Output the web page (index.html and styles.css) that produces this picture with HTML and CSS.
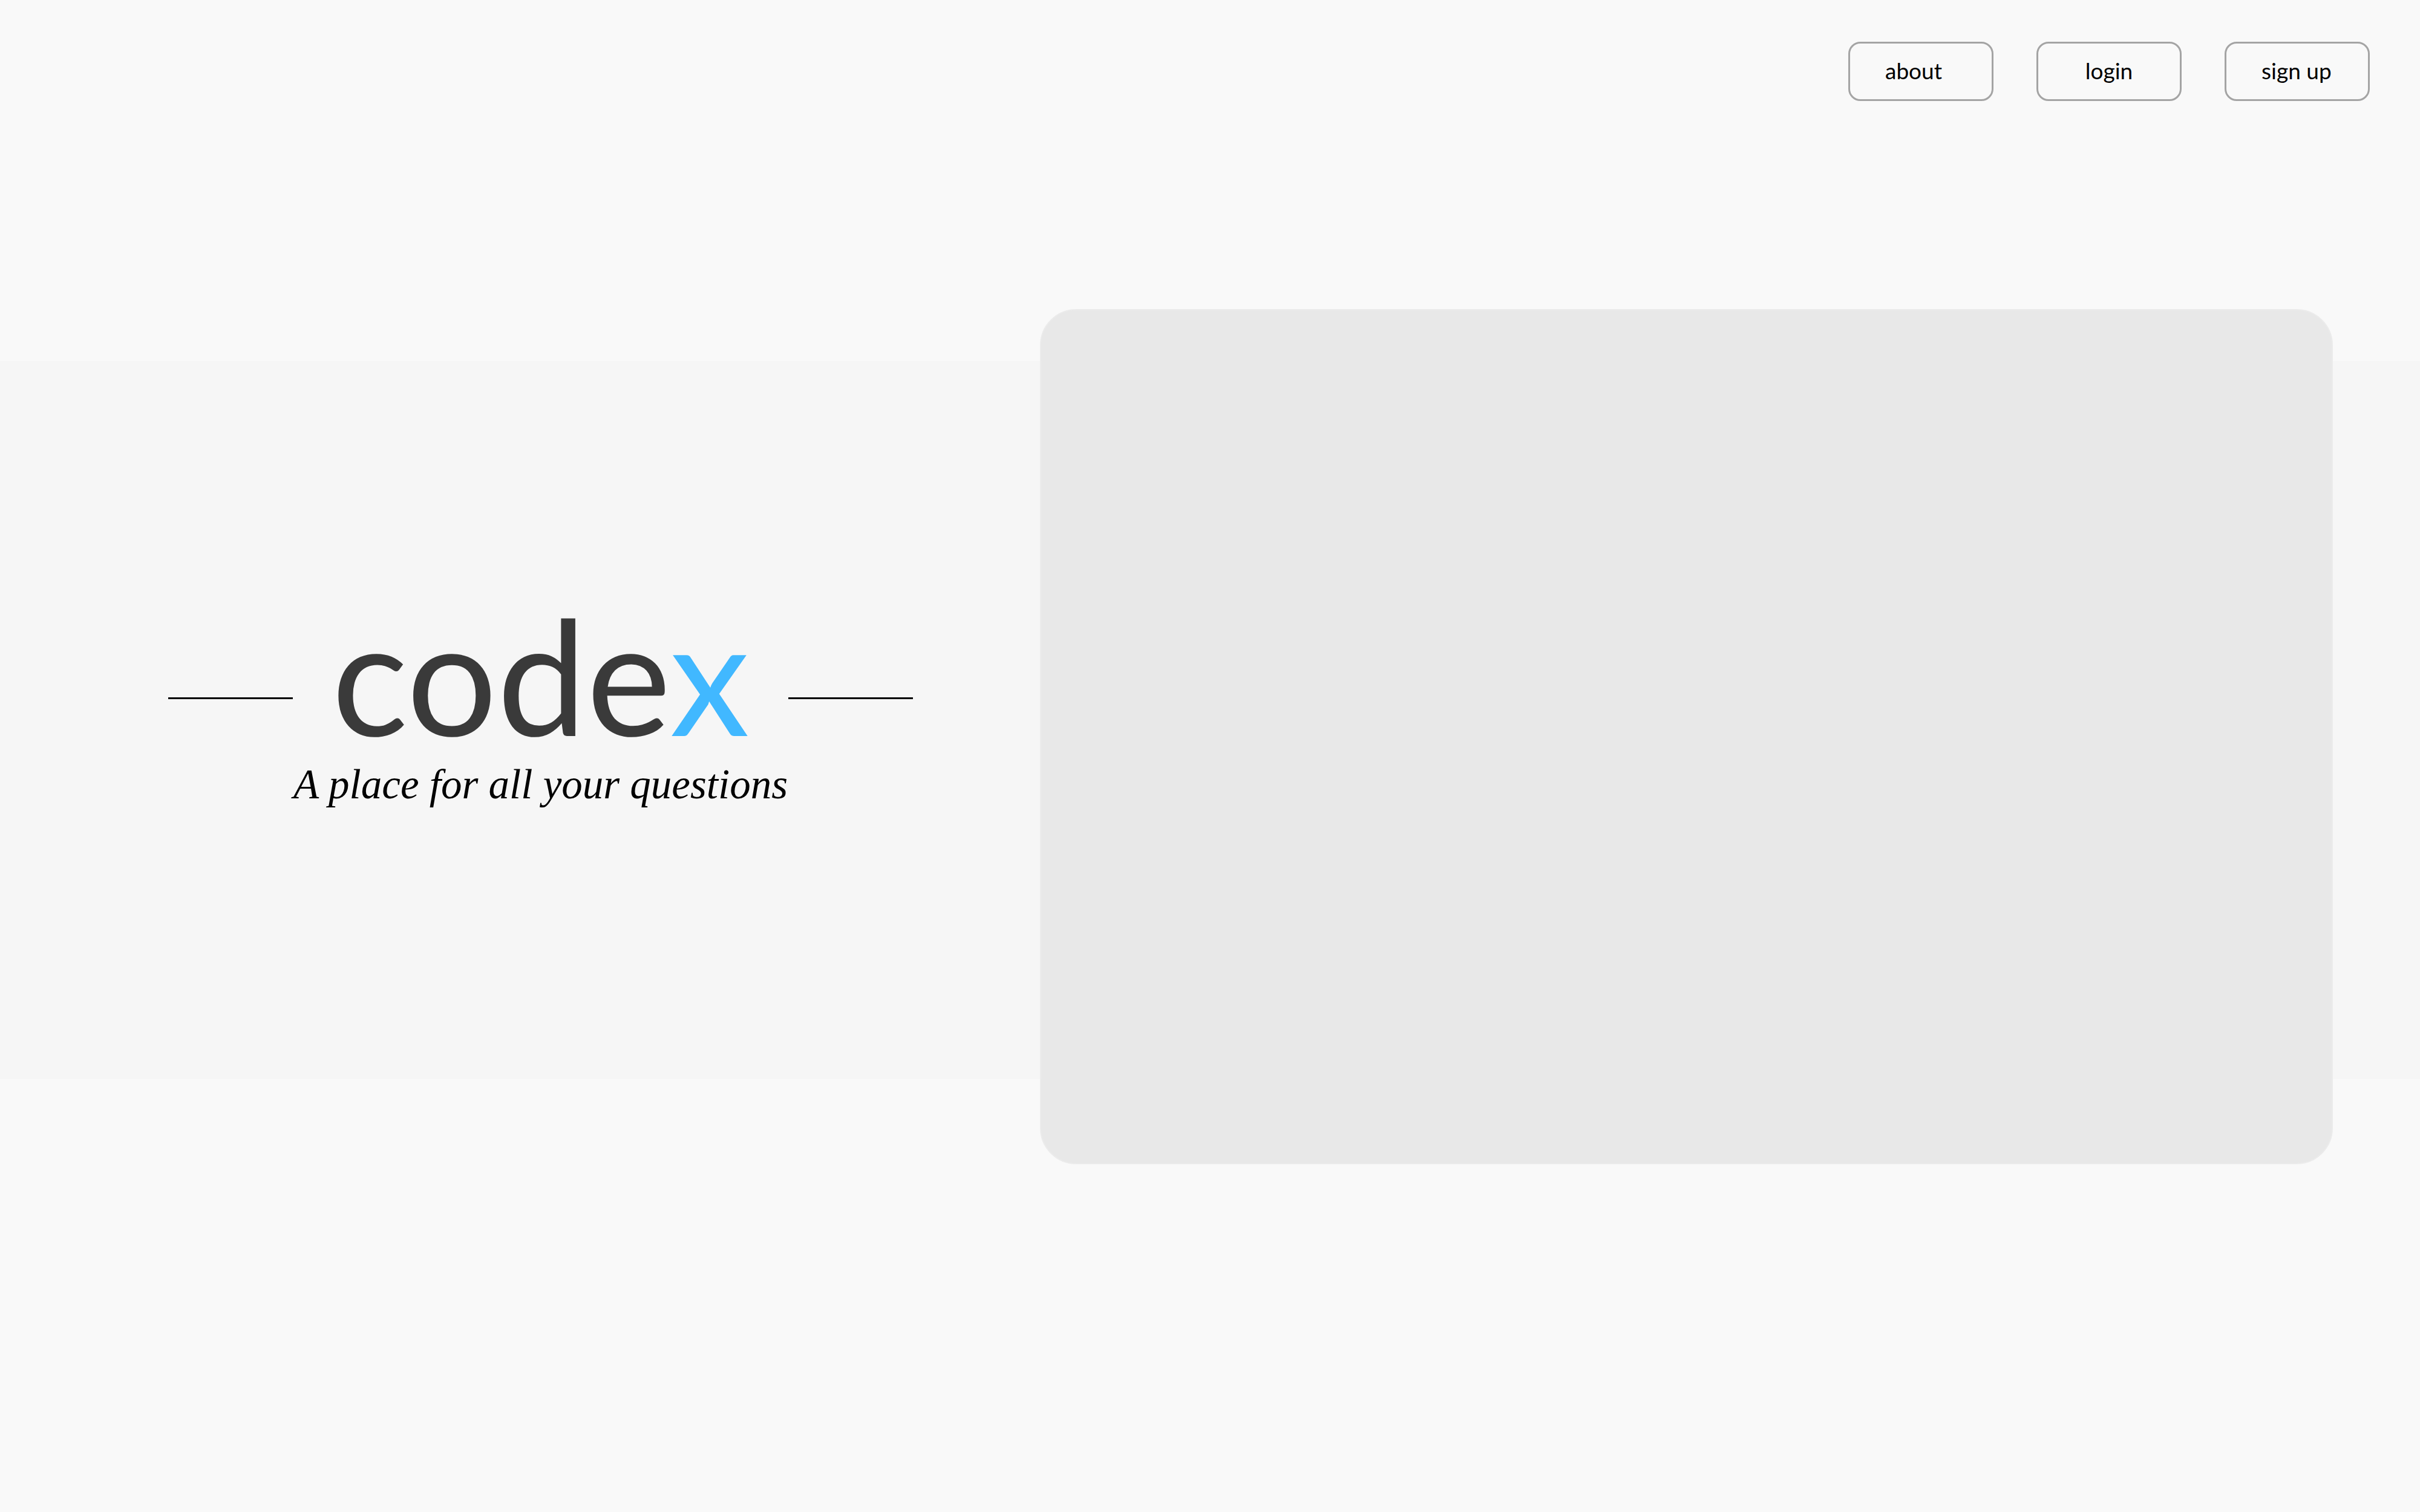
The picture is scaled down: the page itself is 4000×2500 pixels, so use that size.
FILE: index.html
```html
<!DOCTYPE html>
<html lang="en">
<head>
<meta charset="utf-8">
<meta name="viewport" content="width=device-width, initial-scale=1">
<title>codex</title>
<link rel="stylesheet" href="styles.css">
</head>
<body>
<header class="site-header">
  <nav class="nav">
    <button type="button" class="nav-button">about</button>
    <button type="button" class="nav-button nav-button-centered">login</button>
    <button type="button" class="nav-button">sign up</button>
  </nav>
</header>
<main class="hero">
  <section class="intro">
    <div class="brand">
      <span class="rule"></span>
      <h1 class="wordmark">code<span class="accent">x</span></h1>
      <span class="rule"></span>
    </div>
    <p class="tagline">A place for all your questions</p>
  </section>
  <section class="panel"></section>
</main>
</body>
</html>
```

FILE: styles.css
```css
* {
  box-sizing: border-box;
}

body {
  margin: 0;
  min-height: 100vh;
  background: #f9f9f9;
  color: #000;
  font-family: Lato, "Liberation Sans", sans-serif;
}

.site-header {
  padding: 69px 83px 430px;
}

.nav {
  display: flex;
  justify-content: flex-end;
  gap: 71px;
}

.nav-button {
  width: 240px;
  height: 98px;
  padding: 0 58px 2px;
  border: 3px solid #a4a4a4;
  border-radius: 20px;
  background: transparent;
  color: #000;
  font-family: inherit;
  font-size: 37px;
  line-height: 48px;
  text-align: left;
  white-space: nowrap;
  cursor: pointer;
}

.nav-button-centered {
  text-align: center;
}

.hero {
  display: grid;
  grid-template-columns: 1719fr 2137fr;
  align-items: center;
  padding-right: 144px;
  background: #f6f6f6;
}

.intro {
  padding: 0 0 68px 68px;
  text-align: center;
}

.brand {
  display: flex;
  align-items: center;
  justify-content: center;
  gap: 64px;
}

.rule {
  width: 206px;
  height: 3px;
  margin-top: 80px;
  background: #000;
}

.wordmark {
  margin: 0;
  color: #3a3a3a;
  font-size: 264px;
  font-weight: 400;
  line-height: 280px;
}

.accent {
  color: #41b8ff;
}

.tagline {
  margin: 0;
  font-family: "Liberation Serif", serif;
  font-size: 69px;
  font-style: italic;
  line-height: 84px;
}

.panel {
  margin: -86px 0 -141px;
  aspect-ratio: 2137 / 1414;
  border: 2px solid #ebebeb;
  border-radius: 60px;
  background: #e8e8e8;
}
```
